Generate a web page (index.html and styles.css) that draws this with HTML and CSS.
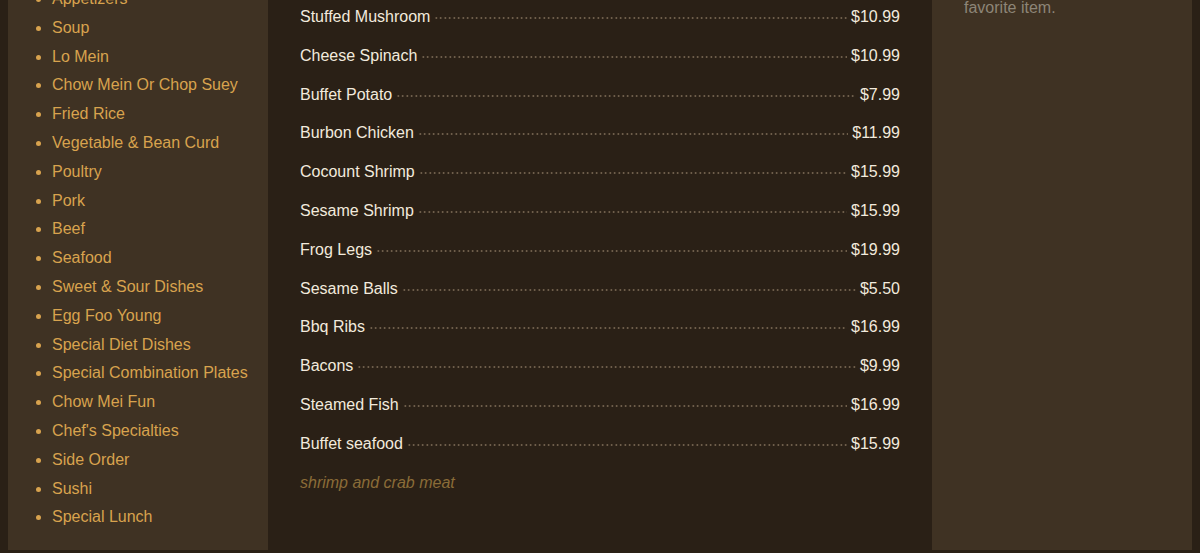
FILE: index.html
```html
<!DOCTYPE html>
<html lang="en">
<head>
    <meta charset="UTF-8">
    <title>Menu</title>
    <link rel="stylesheet" href="styles.css">
</head>
<body>
    <div class="page">
        <aside class="side side-left">
            <ul class="cats">
                <li>Appetizers</li>
                <li>Soup</li>
                <li>Lo Mein</li>
                <li>Chow Mein Or Chop Suey</li>
                <li>Fried Rice</li>
                <li>Vegetable &amp; Bean Curd</li>
                <li>Poultry</li>
                <li>Pork</li>
                <li>Beef</li>
                <li>Seafood</li>
                <li>Sweet &amp; Sour Dishes</li>
                <li>Egg Foo Young</li>
                <li>Special Diet Dishes</li>
                <li>Special Combination Plates</li>
                <li>Chow Mei Fun</li>
                <li>Chef's Specialties</li>
                <li>Side Order</li>
                <li>Sushi</li>
                <li>Special Lunch</li>
            </ul>
        </aside>

        <main class="menu">
            <div class="item"><span class="name">Stuffed Mushroom</span><span class="dots"></span><span class="price">$10.99</span></div>
            <div class="item"><span class="name">Cheese Spinach</span><span class="dots"></span><span class="price">$10.99</span></div>
            <div class="item"><span class="name">Buffet Potato</span><span class="dots"></span><span class="price">$7.99</span></div>
            <div class="item"><span class="name">Burbon Chicken</span><span class="dots"></span><span class="price">$11.99</span></div>
            <div class="item"><span class="name">Cocount Shrimp</span><span class="dots"></span><span class="price">$15.99</span></div>
            <div class="item"><span class="name">Sesame Shrimp</span><span class="dots"></span><span class="price">$15.99</span></div>
            <div class="item"><span class="name">Frog Legs</span><span class="dots"></span><span class="price">$19.99</span></div>
            <div class="item"><span class="name">Sesame Balls</span><span class="dots"></span><span class="price">$5.50</span></div>
            <div class="item"><span class="name">Bbq Ribs</span><span class="dots"></span><span class="price">$16.99</span></div>
            <div class="item"><span class="name">Bacons</span><span class="dots"></span><span class="price">$9.99</span></div>
            <div class="item"><span class="name">Steamed Fish</span><span class="dots"></span><span class="price">$16.99</span></div>
            <div class="item"><span class="name">Buffet seafood</span><span class="dots"></span><span class="price">$15.99</span></div>
            <p class="note">shrimp and crab meat</p>
        </main>

        <aside class="side side-right">
            <p class="tip">Order ahead for your<br>favorite item.</p>
        </aside>
    </div>
</body>
</html>
```

FILE: styles.css
```css
* {
    margin: 0;
    padding: 0;
    box-sizing: border-box;
}

body {
    background: #2a2016;
    font-family: 'Liberation Sans', Arial, sans-serif;
    font-size: 16px;
    overflow: hidden;
}

.page {
    display: grid;
    grid-template-columns: 260px 1fr 260px;
    margin: -63px 8px 0;
}

.side {
    background: #3f3223;
}

.side-left {
    padding: 48px 0 18px;
}

.cats {
    padding-left: 44px;
    color: #d8a34e;
    line-height: 28.8px;
}

.menu {
    padding: 68px 32px 32px;
    display: flex;
    flex-direction: column;
    gap: 14.8px;
}

.item {
    display: flex;
    align-items: center;
    line-height: 24px;
    color: #f2eadd;
}

.dots {
    flex: 1;
    height: 4px;
    margin: 2px 4px 0 4px;
    background: radial-gradient(circle, #7f6e58 0.8px, transparent 1.1px) 0 0 / 4.5px 4px repeat-x;
}

.note {
    line-height: 24px;
    font-style: italic;
    color: #8a6c38;
}

.side-right {
    padding: 35px 32px 0;
}

.tip {
    line-height: 24px;
    color: #8d8577;
}
```
